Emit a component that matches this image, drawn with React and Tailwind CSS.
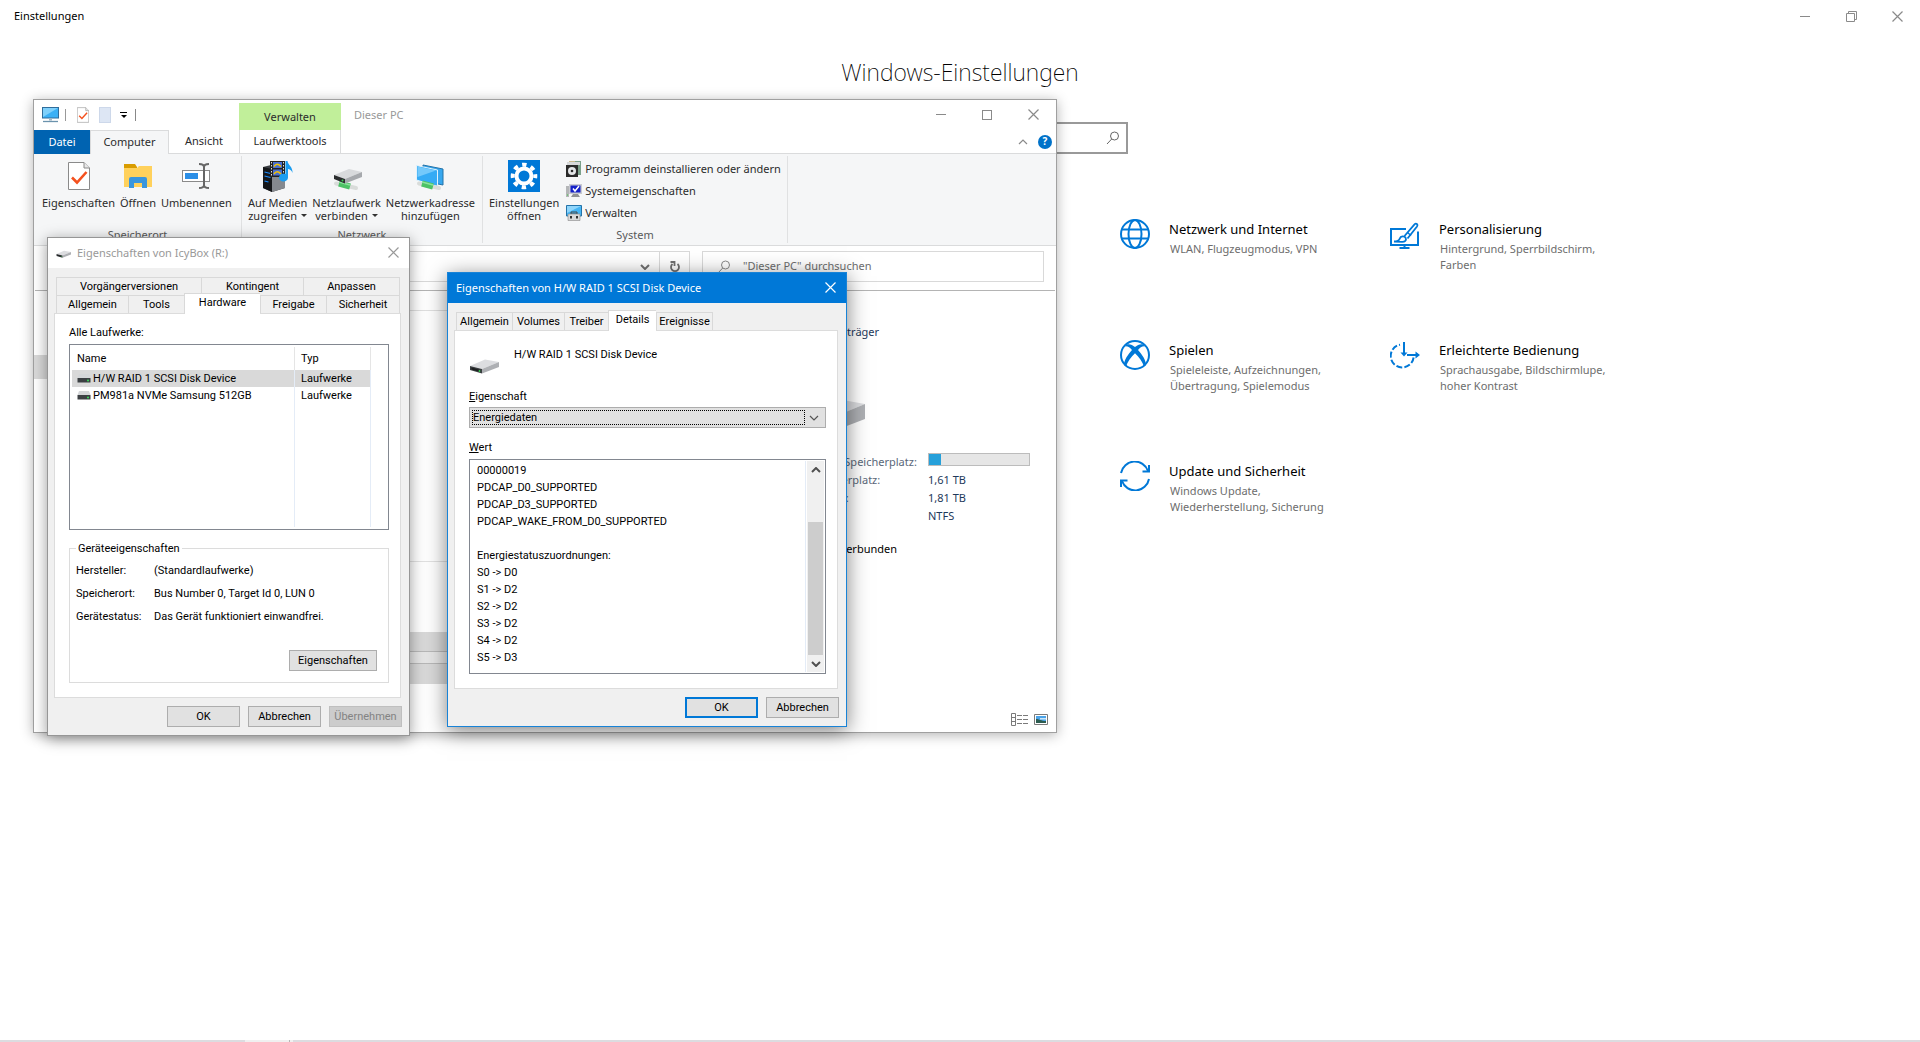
import { useState } from "react";
import clsx from "clsx";

const SETTINGS = [
  {
    title: "Netzwerk und Internet",
    text: "WLAN, Flugzeugmodus, VPN",
    icon: GlobeIcon,
    place: "col-start-4",
  },
  {
    title: "Personalisierung",
    text: "Hintergrund, Sperrbildschirm, Farben",
    icon: PersonalizeIcon,
    place: "col-start-5",
  },
  {
    title: "Spielen",
    text: "Spieleleiste, Aufzeichnungen, Übertragung, Spielemodus",
    icon: XboxIcon,
    place: "col-start-4",
  },
  {
    title: "Erleichterte Bedienung",
    text: "Sprachausgabe, Bildschirmlupe, hoher Kontrast",
    icon: EaseIcon,
    place: "col-start-5",
  },
  {
    title: "Update und Sicherheit",
    text: "Windows Update, Wiederherstellung, Sicherung",
    icon: UpdateIcon,
    place: "col-start-4",
  },
];

const POWER_DATA = [
  "00000019",
  "PDCAP_D0_SUPPORTED",
  "PDCAP_D3_SUPPORTED",
  "PDCAP_WAKE_FROM_D0_SUPPORTED",
  "",
  "Energiestatuszuordnungen:",
  "S0 -> D0",
  "S1 -> D2",
  "S2 -> D2",
  "S3 -> D2",
  "S4 -> D2",
  "S5 -> D3",
];

const DRIVES = [
  { name: "H/W RAID 1 SCSI Disk Device", type: "Laufwerke" },
  { name: "PM981a NVMe Samsung 512GB", type: "Laufwerke" },
];

/* ---------- icons ---------- */

function GlobeIcon() {
  return (
    <svg viewBox="0 0 30 30" className="size-[30px]" fill="none" stroke="#0078d7" strokeWidth="2">
      <circle cx="15" cy="15" r="14" />
      <ellipse cx="15" cy="15" rx="6.5" ry="14" />
      <path d="M2 10.5h26M2 19.5h26" />
    </svg>
  );
}

function PersonalizeIcon() {
  return (
    <svg viewBox="0 0 30 30" className="size-[30px]" fill="none" stroke="#0078d7" strokeWidth="2">
      <path d="M16 10H1v16h27V12.500" />
      <path d="M14.500 26v3M9.500 29h10" />
      <path d="M14.500 17 24.500 5.300c1.700-1.600 3.900.2 2.500 2.200L17.500 19.500" strokeWidth="1.800" />
      <path d="M4 22.500c4 0 5.200-.8 5.800-3 .7-2.500 4.700-3 5.900-.5 1 2.300-.9 3.800-3.400 3.800z" strokeWidth="1.800" />
      <path d="m17.500 13.500 3.500 3" strokeWidth="1.500" />
    </svg>
  );
}

function XboxIcon() {
  return (
    <svg viewBox="0 0 30 30" className="size-[30px]">
      <circle cx="15" cy="15" r="14" fill="none" stroke="#0078d7" strokeWidth="2" />
      <path
        fill="#0078d7"
        d="M7 4.500C9.500 3.500 12.500 5 15 7c2.500-2 5.500-3.500 8-2.500l2.500 2C22.500 5.800 20 7.800 18 10c4 4.500 8 10 8 15l-2 1.500C22.500 21.500 19 17 15 13.200 11 17 7.500 21.500 6 26.500L4 25c0-5 4-10.500 8-15C10 7.800 7.500 5.800 4.500 6.500z"
      />
    </svg>
  );
}

function EaseIcon() {
  return (
    <svg viewBox="0 0 30 30" className="size-[30px]" fill="none" stroke="#0078d7" strokeWidth="2">
      <path d="M23.600 17.500A11.500 11.500 0 1 1 10 4.700" strokeDasharray="6 2.200" />
      <path d="M14 2v12M17 15h9" />
      <path d="M10.500 12.500h7L14 16.500zM25.500 11.500 30 15l-4.500 3.500z" fill="#0078d7" stroke="none" />
    </svg>
  );
}

function UpdateIcon() {
  return (
    <svg viewBox="0 0 30 30" className="size-[30px]" fill="none" stroke="#0078d7" strokeWidth="2">
      <path d="M1 12A14 14 0 0 1 28 10" />
      <path d="M29 4v6.500h-6.500" />
      <path d="M29 18A14 14 0 0 1 2 20" />
      <path d="M1 26v-6.500h6.500" />
    </svg>
  );
}

function SearchIcon({ className }) {
  return (
    <svg viewBox="0 0 14 14" className={clsx("size-3.5", className)} fill="none" stroke="currentColor">
      <circle cx="8.500" cy="5" r="4" />
      <path d="M5.700 8 1 13" />
    </svg>
  );
}

function CloseIcon({ className }) {
  return (
    <svg viewBox="0 0 11 11" className={clsx("size-[11px]", className)} fill="none" stroke="currentColor">
      <path d="m.5.5 10 10M10.500.5l-10 10" strokeWidth="1.200" />
    </svg>
  );
}

function Chevron({ up, bold, className }) {
  return (
    <svg
      viewBox="0 0 10 6"
      className={clsx("h-1.5 w-2.5", up && "rotate-180", className)}
      fill="none"
      stroke="currentColor"
      strokeWidth={bold ? 2 : 1.2}
    >
      <path d="m1 1 4 4 4-4" />
    </svg>
  );
}

function DocumentCheck({ className }) {
  return (
    <svg viewBox="0 0 22 28" className={className}>
      <path d="M.5.500h15.500l5.500 5.500v21.500H.5z" fill="#fff" stroke="#8a8a8a" />
      <path d="M16 .5V6h5.500" fill="#e8e8e8" stroke="#8a8a8a" />
      <path d="m4 15.500 5 5L18.500 10" fill="none" stroke="#f4511e" strokeWidth="2.600" />
    </svg>
  );
}

function MonitorIcon() {
  return (
    <svg viewBox="0 0 17 16" className="h-4 w-[17px]">
      <rect x=".5" y=".5" width="16" height="10.500" fill="#3bb0f5" stroke="#2f6d9c" />
      <path d="M1 1h15L1 10z" fill="#7fd0fb" />
      <path d="M7 11h3v2.500H7z" fill="#9fb6c6" />
      <path d="M1 14.500h15" stroke="#6b93ad" strokeWidth="1.300" />
    </svg>
  );
}

function FolderIcon() {
  return (
    <svg viewBox="0 0 28 24" className="h-6 w-7">
      <path d="M0 0h11l2 3v3H0z" fill="#d99c00" />
      <path d="M0 4h13l2-2h13v21H0z" fill="#ffd15c" />
      <path d="M5 15a2 2 0 0 1 2-2h14a2 2 0 0 1 2 2v9h-5v-5h-8v5H5z" fill="#3a96dd" />
    </svg>
  );
}

function RenameIcon() {
  return (
    <svg viewBox="0 0 28 26" className="h-[26px] w-7">
      <rect x=".5" y="7.500" width="27" height="11" fill="#fff" stroke="#8a8a8a" />
      <rect x="3" y="10" width="13" height="6" fill="#2b8ee6" />
      <path d="M17 1c3 0 5 .5 5 3 0-2.500 2-3 5-3M22 3v20M17 25c3 0 5-.5 5-3 0 2.500 2 3 5 3" fill="none" stroke="#666" strokeWidth="2" />
    </svg>
  );
}

function MediaIcon() {
  return (
    <svg viewBox="0 0 32 32" className="size-8">
      <path d="M1 7l8-2 14 5v18l-13 4-9-4z" fill="#3c3f44" />
      <path d="M10 9l13-2v21l-13 4z" fill="#85898f" />
      <path d="M1 7l9 2v23l-9-4z" fill="#15171a" />
      <path d="M2.500 12l6 1.500M2.500 16l6 1.500M2.500 21l4 1" stroke="#1b8cff" strokeWidth="1.200" />
      <rect x="8" y="1" width="15" height="16" fill="#222" />
      <rect x="11" y="2" width="9" height="6" fill="#4a6fd0" />
      <rect x="11" y="9.500" width="9" height="6" fill="#4a6fd0" />
      <path d="M12 6.500c2-3 4-3 7 0M12 14c2-3 4-3 7 0" stroke="#f2c200" strokeWidth="1.500" fill="none" />
      <path d="M9.500 2v15M21.500 2v15" stroke="#ddd" strokeDasharray="1.500 1.500" />
      <path d="M23.500 1h2c.5 4 5.500 6 5 12-1-3-3-4-4.500-4v8.500a4.500 4 0 1 1-2.500-3.500z" fill="#1b9df0" />
    </svg>
  );
}

function DriveIcon({ className, dark }) {
  return (
    <svg viewBox="0 0 32 16" className={className}>
      <path d="M1 8 16 1.500l14 2.500-17 7z" fill="#dcdde0" />
      <path d="M13 11 30 4v5L13 15.500z" fill="#aeb0b4" />
      <path d="M1 8l12 3v4.500L1 12z" fill={dark ? "#3c3f42" : "#5a5d60"} />
      <path d="M2.500 9.600l9 2.300v2L2.500 11.500z" fill="#1e2022" />
      <circle cx="10.500" cy="13" r=".9" fill="#39d353" />
    </svg>
  );
}

// Green network cable that sits below the shared drive / network monitors
function Cable() {
  return (
    <g>
      <path d="M5 22.500 25 27" stroke="#d9dcda" strokeWidth="4" strokeLinecap="round" />
      <path d="M8 22.500 19 25.500" stroke="#4cc265" strokeWidth="6" />
      <path d="M8 21 19 24" stroke="#8be39c" strokeWidth="1.500" />
    </g>
  );
}

function NetDriveIcon() {
  return (
    <svg viewBox="0 0 32 30" className="h-[30px] w-8">
      <Cable />
      <path d="M3 14 18 8l13 3-17 7z" fill="#d8dadc" />
      <path d="M14 18 31 11v5l-17 6.500z" fill="#a6a9ad" />
      <path d="M3 14l11 4v4.500L3 18z" fill="#2b2d2f" />
      <circle cx="11.500" cy="19.500" r="1" fill="#39d353" />
    </svg>
  );
}

function NetPlaceIcon() {
  return (
    <svg viewBox="0 0 32 30" className="h-[30px] w-8">
      <path d="M9 4l20 4v16L9 20z" fill="#37a7ee" stroke="#2573a8" />
      <path d="M2.500 4.500 23.500 9v16.500L2.500 19z" fill="#35abf5" stroke="#e2f2fc" />
      <path d="M3.500 5.500 22 9.500 3.500 16z" fill="#74c9fb" />
      <Cable />
    </svg>
  );
}

function GearTile() {
  return (
    <svg viewBox="0 0 32 32" className="size-8">
      <path d="M0 0h32v32H0z" fill="#0078d7" />
      <circle cx="16" cy="16" r="7.500" fill="none" stroke="#fff" strokeWidth="4" />
      <circle cx="16" cy="16" r="11.300" fill="none" stroke="#fff" strokeWidth="4" strokeDasharray="4.400 4.475" strokeDashoffset="2.200" />
    </svg>
  );
}

function ProgramsIcon() {
  return (
    <svg viewBox="0 0 16 16" className="size-4">
      <path d="M3 0h12v13H3z" fill="#c9b98e" />
      <path d="M9 0h6v14H9z" fill="#7ba08a" />
      <path d="M1 1h13v3H1z" fill="#d7d9da" />
      <path d="M0 4h12v12H0z" fill="#2a2a2a" />
      <circle cx="6" cy="10" r="4" fill="#e4e6e8" />
      <circle cx="6" cy="10" r="1.300" fill="#2a2a2a" />
    </svg>
  );
}

function SystemIcon() {
  return (
    <svg viewBox="0 0 16 16" className="size-4">
      <path d="M0 3h3v11H0z" fill="#b4b6b8" />
      <path d="M3 1h13v10H3z" fill="#c9cbd0" />
      <path d="M4.500 2.500h10v7h-10z" fill="#1420c8" />
      <path d="m7 5.500 2 2.500 4-5" fill="none" stroke="#fff" strokeWidth="1.500" />
      <path d="M7 11h5l2 3H5z" fill="#8f9194" />
      <path d="M1 12h1" stroke="#3bd23b" />
    </svg>
  );
}

function ManageIcon() {
  return (
    <svg viewBox="0 0 16 16" className="size-4">
      <path d="M.5.500h15V11H.5z" fill="#45b5f5" stroke="#2573a8" />
      <path d="M1 1h14L1 8z" fill="#8fd5fb" />
      <path d="M5 7h6v2H5z" fill="none" stroke="#444" />
      <path d="M2 9h12v6.500H2z" fill="#d9d9d9" stroke="#888" strokeWidth=".6" />
      <path d="M5 11v2.500M11 11v2.500" stroke="#333" strokeWidth="2" />
    </svg>
  );
}

function RefreshIcon() {
  return (
    <svg viewBox="0 0 12 12" className="size-3" fill="none" stroke="#707070" strokeWidth="1.800">
      <path d="M8.500 3A4 4 0 1 1 3.500 3" />
      <path d="M1.500 1h4v4" />
    </svg>
  );
}

function MiniDrive() {
  return (
    <svg viewBox="0 0 14 9" className="mr-0.5 h-[9px] w-3.5">
      <path d="M2 0h10l1.500 4H.5z" fill="#d4d6d8" />
      <path d="M.5 4h13v4.500H.5z" fill="#3c4043" />
      <circle cx="11" cy="6.500" r="1" fill="#39e05a" />
    </svg>
  );
}

/* ---------- shared controls ---------- */

function DialogButton({ children, primary, disabled, wide }) {
  return (
    <button
      type="button"
      disabled={disabled}
      className={clsx(
        "h-[21px] text-center",
        wide ? "w-[88px]" : "w-[73px]",
        primary ? "border-2 border-[#0078d7]" : "border border-[#adadad]",
        disabled ? "border-[#bfbfbf] bg-[#cccccc] text-[#838383]" : "bg-[#e1e1e1]"
      )}
    >
      {children}
    </button>
  );
}

function Tab({ children, className, active, last }) {
  return (
    <button
      type="button"
      role="tab"
      aria-selected={!!active}
      className={clsx(
        "border-t border-l border-[#d9d9d9] text-center",
        active ? "relative -mt-0.5 -mb-px bg-white pb-1" : "bg-[#f0f0f0]",
        last && "border-r",
        className
      )}
    >
      {children}
    </button>
  );
}

function RibbonButton({ icon, lines, arrow }) {
  return (
    <button type="button" className="flex flex-col items-center">
      <span className="flex h-8 items-center">{icon}</span>
      <span className="mt-1 flex flex-col items-center leading-[13px]">
        {lines.map((line, i) => (
          <span key={line} className="flex items-center gap-1 whitespace-nowrap">
            {line}
            {arrow && i === lines.length - 1 && (
              <span className="border-x-[3px] border-t-[3px] border-x-transparent border-t-[#333]" />
            )}
          </span>
        ))}
      </span>
    </button>
  );
}

function RibbonGroup({ label, className, children }) {
  return (
    <section className={clsx("my-0.5 flex flex-col justify-between border-r border-[#e0e1e2]", className)}>
      <div className="flex items-start pt-1">{children}</div>
      <span className="text-center leading-4 text-[#5a5a5a]">{label}</span>
    </section>
  );
}

/* ---------- windows ---------- */

function SettingsPage() {
  return (
    <main className="flex min-h-screen flex-col">
      <header className="flex h-8 items-center justify-between pl-3.5 text-[11px]">
        <span>Einstellungen</span>
        <div className="flex text-[#8a8a8a]">
          <button type="button" aria-label="Minimieren" className="flex h-8 w-[46px] items-center justify-center">
            <span className="h-px w-2.5 bg-current" />
          </button>
          <button type="button" aria-label="Verkleinern" className="flex h-8 w-[46px] items-center justify-center">
            <svg viewBox="0 0 11 11" className="size-[11px]" fill="none" stroke="currentColor">
              <path d="M.5 2.500h8v8h-8zM2.500 2.500v-2h8v8h-2" />
            </svg>
          </button>
          <button type="button" aria-label="Schließen" className="flex h-8 w-[46px] items-center justify-center">
            <CloseIcon />
          </button>
        </div>
      </header>
      <h1 className="mt-6 text-center text-[23px] leading-8 font-extralight">Windows-Einstellungen</h1>
      <div className="mx-auto mt-[34px] flex h-8 w-[336px] items-center justify-end border-2 border-[#999] pr-1.5">
        <input aria-label="Einstellung suchen" className="min-w-0 flex-1 outline-none" />
        <SearchIcon className="text-[#666]" />
      </div>
      <div className="mx-auto mt-[65px] grid auto-rows-[121px] grid-cols-[repeat(5,270px)]">
        {SETTINGS.map(({ title, text, icon: Icon, place }) => (
          <a key={title} href="#" className={clsx("flex items-start gap-[19px] pl-[25px]", place)}>
            <span className="shrink-0">
              <Icon />
            </span>
            <span className="flex w-[172px] flex-col">
              <span className="text-[13px] leading-5">{title}</span>
              <span className="mt-0.5 ml-px text-[11px] leading-4 text-[#6d6d6d]">{text}</span>
            </span>
          </a>
        ))}
      </div>
      <footer className="mt-auto flex h-0.5 bg-[#dcdce0]">
        <span className="ml-[245px] w-[44px] bg-[#f0f0f0]" />
        <span className="w-px bg-[#b5b5b5]" />
        <span className="w-[3px] bg-[#f0f0f0]" />
      </footer>
    </main>
  );
}

function ExplorerWindow() {
  return (
    <section className="absolute top-[99px] left-[33px] flex h-[634px] w-[1024px] flex-col border border-[#a0a0a0] bg-white text-[11px] text-[#2b2b2b] shadow-[0_2px_12px_rgba(0,0,0,0.3)]">
      <header className="flex h-[30px] shrink-0 items-center">
        <div className="flex w-[205px] items-center pl-2">
          <MonitorIcon />
          <span className="ml-1.5 h-3 w-px bg-[#999]" />
          <DocumentCheck className="ml-[11px] h-4 w-3" />
          <span className="ml-2.5 h-4 w-3 border border-[#cdd8ea] bg-[#dde6f4]" />
          <span className="ml-[9px] flex flex-col items-center gap-0.5">
            <span className="h-px w-[7px] bg-black" />
            <span className="border-x-[3px] border-t-[3px] border-x-transparent border-t-black" />
          </span>
          <span className="ml-2 h-3 w-px bg-[#888]" />
        </div>
        <span className="flex h-[27px] w-[102px] items-center justify-center self-end bg-[#c1ef9a] pt-px">Verwalten</span>
        <h2 className="ml-[13px] text-[#999]">Dieser PC</h2>
        <div className="ml-auto flex pb-px text-[#8a8a8a]">
          <button type="button" aria-label="Minimieren" className="flex h-7 w-[46px] items-center justify-center">
            <span className="h-px w-2.5 bg-current" />
          </button>
          <button type="button" aria-label="Maximieren" className="flex h-7 w-[46px] items-center justify-center">
            <span className="size-2.5 border border-current" />
          </button>
          <button type="button" aria-label="Schließen" className="flex h-7 w-[46px] items-center justify-center">
            <CloseIcon />
          </button>
        </div>
      </header>

      <nav className="flex h-6 shrink-0">
        <button type="button" className="w-14 bg-[#0063b1] text-white">Datei</button>
        <button type="button" className="w-[79px] border-x border-t border-[#dadbdc] bg-[#f5f6f7]">Computer</button>
        <button type="button" className="w-[70px] border-b border-[#dadbdc]">Ansicht</button>
        <button type="button" className="w-[102px] border-x border-b border-[#dadbdc]">Laufwerktools</button>
        <div className="flex flex-1 items-center justify-end gap-2.5 border-b border-[#dadbdc] pr-1">
          <Chevron up className="text-[#8a8a8a]" />
          <a
            href="#"
            aria-label="Hilfe"
            className="flex size-3.5 items-center justify-center rounded-full bg-[#0072c9] text-[10px] font-bold text-white"
          >
            ?
          </a>
        </div>
      </nav>

      <div className="flex h-[92px] shrink-0 border-b border-[#dadbdc] bg-[#f5f6f7]">
        <RibbonGroup label="Speicherort" className="w-52">
          <div className="flex gap-[5px] pl-2">
            <RibbonButton icon={<DocumentCheck className="h-7 w-[22px]" />} lines={["Eigenschaften"]} />
            <RibbonButton icon={<FolderIcon />} lines={["Öffnen"]} />
            <RibbonButton icon={<RenameIcon />} lines={["Umbenennen"]} />
          </div>
        </RibbonGroup>
        <RibbonGroup label="Netzwerk" className="w-[241px]">
          <div className="flex gap-[5px] pl-1.5">
            <RibbonButton icon={<MediaIcon />} lines={["Auf Medien", "zugreifen"]} arrow />
            <RibbonButton icon={<NetDriveIcon />} lines={["Netzlaufwerk", "verbinden"]} arrow />
            <RibbonButton icon={<NetPlaceIcon />} lines={["Netzwerkadresse", "hinzufügen"]} />
          </div>
        </RibbonGroup>
        <RibbonGroup label="System" className="w-[305px]">
          <div className="flex gap-[7px] pl-1.5">
            <RibbonButton icon={<GearTile />} lines={["Einstellungen", "öffnen"]} />
            <div className="-mt-px flex flex-col gap-0.5">
              <button type="button" className="flex h-5 items-center gap-[3px]">
                <ProgramsIcon />
                Programm deinstallieren oder ändern
              </button>
              <button type="button" className="flex h-5 items-center gap-[3px]">
                <SystemIcon />
                Systemeigenschaften
              </button>
              <button type="button" className="flex h-5 items-center gap-[3px]">
                <ManageIcon />
                Verwalten
              </button>
            </div>
          </div>
        </RibbonGroup>
      </div>

      <div className="mx-px flex h-[45px] shrink-0 border-b border-[#b4b4b4] pt-[5px] pr-[11px] pl-[100px]">
        <div className="flex h-[31px] flex-1 border border-[#d9d9d9]">
          <span className="ml-auto flex w-[29px] items-center justify-center">
            <Chevron bold className="text-[#707070]" />
          </span>
          <button
            type="button"
            aria-label="Aktualisieren"
            className="flex w-[30px] items-center justify-center border-l border-[#d9d9d9]"
          >
            <RefreshIcon />
          </button>
        </div>
        <label className="ml-3 flex h-[31px] w-[342px] items-center gap-3 border border-[#d9d9d9] pl-3.5">
          <SearchIcon className="text-[#8a8a8a]" />
          <input
            aria-label="Suchen"
            placeholder={'"Dieser PC" durchsuchen'}
            className="min-w-0 flex-1 outline-none placeholder:text-[#6d6d6d]"
          />
        </label>
      </div>

      <div className="flex flex-1">
        <aside className="w-[200px] pt-16">
          <div className="h-6 bg-[#d9d9d9]" />
        </aside>
        <div className="flex w-[526px] flex-col">
          <div className="h-5 border-b border-[#e0e0e0]" />
          <div className="h-[251px] border-b border-[#e2e2e2]" />
          <div className="mt-[70px] h-5 border-b border-[#b8b8b8] bg-[#d9d9d9]" />
          <div className="h-3 border-b border-[#b8b8b8] bg-[#e6e6e6]" />
          <div className="h-5 bg-[#d9d9d9]" />
        </div>
        <aside className="flex flex-1 flex-col pt-8 pl-[15px] text-[#1e395b]">
          <p className="leading-[18px]">Lokaler Datenträger</p>
          <DriveIcon className="mt-[51px] h-12 w-24" />
          <dl className="mt-[13px] grid grid-cols-[153px_102px] leading-[18px]">
            <dt className="text-[#5a6779]">Verwendeter Speicherplatz:</dt>
            <dd className="flex items-start">
              <span className="h-[13px] w-full border border-[#bcbcbc] bg-[#e6e6e6]">
                <span className="block h-full w-3 bg-[#26a0da]" />
              </span>
            </dd>
            <dt className="text-[#5a6779]">Freier Speicherplatz:</dt>
            <dd>1,61 TB</dd>
            <dt className="text-[#5a6779]">Gesamtgröße:</dt>
            <dd>1,81 TB</dd>
            <dt className="text-[#5a6779]">Dateisystem:</dt>
            <dd>NTFS</dd>
          </dl>
          <p className="mt-[15px] leading-[18px] text-black">Laufwerk ist verbunden</p>
          <div className="mt-auto flex items-center gap-1.5 self-end pr-2 pb-1.5">
            <button type="button" aria-label="Details">
              <svg viewBox="0 0 17 13" className="h-[13px] w-[17px]" stroke="#7a7a7a" fill="none">
                <path d="M.5.500h4v12h-4zM.5 4.500h4M.5 8.500h4" />
                <path d="M6 2.500h5M12 2.500h5M6 6.500h5M12 6.500h5M6 10.500h5M12 10.500h5" />
              </svg>
            </button>
            <button type="button" aria-label="Große Symbole">
              <svg viewBox="0 0 14 13" className="h-[13px] w-3.5">
                <path d="M.5 1.500h13v10H.5z" fill="#fff" stroke="#7a7a7a" />
                <path d="M2 3h10v7H2z" fill="#4aa3e8" />
                <path d="M2 6c3 0 5 2 10 2v2H2z" fill="#2c5c50" />
                <path d="M6 5h6v1.500H6z" fill="#cfe8fa" />
              </svg>
            </button>
          </div>
        </aside>
      </div>
    </section>
  );
}

function DriveProperties() {
  const [selected, setSelected] = useState(0);

  return (
    <section className="absolute top-[237px] left-[47px] flex w-[363px] flex-col border border-[#969696] bg-[#f0f0f0] font-['Roboto',sans-serif] text-[11px] leading-[13px] text-black shadow-[0_3px_14px_rgba(0,0,0,0.4)]">
      <header className="flex h-[30px] items-center bg-white pr-2.5 pb-0.5 pl-2 font-['Noto_Sans',sans-serif] text-[#999]">
        <DriveIcon dark className="mt-1 h-2 w-4" />
        <h2 className="ml-[5px]">Eigenschaften von IcyBox (R:)</h2>
        <button type="button" aria-label="Schließen" className="ml-auto">
          <CloseIcon />
        </button>
      </header>

      <div role="tablist" className="mt-[9px] ml-2 flex flex-col">
        <div className="flex h-[18px]">
          <Tab className="w-[145px]">Vorgängerversionen</Tab>
          <Tab className="w-[102px]">Kontingent</Tab>
          <Tab className="w-[97px]" last>Anpassen</Tab>
        </div>
        <div className="flex h-[18px]">
          <Tab className="w-[72px]">Allgemein</Tab>
          <Tab className="w-14">Tools</Tab>
          <Tab className="w-[76px]" active>Hardware</Tab>
          <Tab className="w-[66px]">Freigabe</Tab>
          <Tab className="w-[74px]" last>Sicherheit</Tab>
        </div>
      </div>

      <div className="mr-2 ml-1.5 border border-[#dcdcdc] bg-white pt-3 pr-[11px] pb-3.5 pl-3.5">
        <p>Alle Laufwerke:</p>
        <div className="mt-[5px] h-[186px] border border-[#828790] p-0.5">
          <table className="h-full w-[299px] text-left">
            <thead>
              <tr className="h-[23px]">
                <th className="border-r border-[#e5e5e5] pl-[5px] font-normal">Name</th>
                <th className="w-[76px] border-r border-[#e5e5e5] pl-1.5 font-normal">Typ</th>
              </tr>
            </thead>
            <tbody>
              {DRIVES.map((drive, i) => (
                <tr
                  key={drive.name}
                  onClick={() => setSelected(i)}
                  className={clsx("h-[17px]", selected === i && "bg-[#d9d9d9]")}
                >
                  <td className="border-r border-[#e4ecf7] pl-[5px]">
                    <span className="flex items-center">
                      <MiniDrive />
                      {drive.name}
                    </span>
                  </td>
                  <td className="border-r border-[#e4ecf7] pl-1.5">{drive.type}</td>
                </tr>
              ))}
              <tr>
                <td className="border-r border-[#e4ecf7]" />
                <td className="border-r border-[#e4ecf7]" />
              </tr>
            </tbody>
          </table>
        </div>

        <fieldset className="mt-3 flex flex-col border border-[#dcdcdc] pb-[11px] pl-1.5">
          <legend className="px-0.5">Geräteeigenschaften</legend>
          <dl className="grid grid-cols-[78px_1fr] gap-y-2.5 pt-[9px]">
            <dt>Hersteller:</dt>
            <dd>(Standardlaufwerke)</dd>
            <dt>Speicherort:</dt>
            <dd>Bus Number 0, Target Id 0, LUN 0</dd>
            <dt>Gerätestatus:</dt>
            <dd>Das Gerät funktioniert einwandfrei.</dd>
          </dl>
          <div className="mt-[27px] mr-[11px] flex justify-end">
            <DialogButton wide>Eigenschaften</DialogButton>
          </div>
        </fieldset>
      </div>

      <div className="flex justify-end gap-2 pt-2 pr-[7px] pb-2">
        <DialogButton>OK</DialogButton>
        <DialogButton>Abbrechen</DialogButton>
        <DialogButton disabled>Übernehmen</DialogButton>
      </div>
    </section>
  );
}

function DeviceProperties() {
  const [property, setProperty] = useState("Energiedaten");

  return (
    <section className="absolute top-[272px] left-[447px] flex w-[400px] flex-col border border-[#1883d7] bg-[#f0f0f0] font-['Roboto',sans-serif] text-[11px] leading-[13px] text-black shadow-[0_4px_20px_rgba(0,0,0,0.5)]">
      <header className="flex h-[30px] items-center bg-[#0078d7] pr-2.5 pb-0.5 pl-2 font-['Noto_Sans',sans-serif] text-white">
        <h2>Eigenschaften von H/W RAID 1 SCSI Disk Device</h2>
        <button type="button" aria-label="Schließen" className="ml-auto">
          <CloseIcon />
        </button>
      </header>

      <div role="tablist" className="mt-[9px] ml-2 flex h-[18px]">
        <Tab className="w-14">Allgemein</Tab>
        <Tab className="w-[52px]">Volumes</Tab>
        <Tab className="w-11">Treiber</Tab>
        <Tab className="w-12" active>Details</Tab>
        <Tab className="w-[57px]" last>Ereignisse</Tab>
      </div>

      <div className="mr-2 ml-1.5 border border-[#dcdcdc] bg-white pt-[17px] pr-[11px] pb-3.5 pl-3.5">
        <div className="flex gap-[13px]">
          <DriveIcon dark className="mt-2.5 h-4 w-8" />
          <p>H/W RAID 1 SCSI Disk Device</p>
        </div>
        <label htmlFor="property" className="mt-4 block">
          <u>E</u>igenschaft
        </label>
        <div className="mt-1 flex h-[21px] items-center border border-[#adadad] bg-[#e1e1e1] p-0.5">
          <select
            id="property"
            value={property}
            onChange={(e) => setProperty(e.target.value)}
            className="h-full flex-1 appearance-none border border-dotted border-black outline-none"
          >
            <option>Energiedaten</option>
          </select>
          <Chevron className="mx-1 text-[#555]" />
        </div>
        <p className="mt-[13px]">
          <u>W</u>ert
        </p>
        <div className="mt-[5px] flex h-[215px] border border-[#828790] p-px">
          <ul className="flex-1 border-r border-[#e4ecf7] pt-px pl-1.5 leading-[17px]">
            {POWER_DATA.map((line, i) => (
              <li key={i} className="h-[17px]">
                {line}
              </li>
            ))}
          </ul>
          <div className="ml-px flex w-[17px] flex-col items-center bg-[#f0f0f0] text-[#505050]">
            <span className="flex h-[17px] items-center">
              <Chevron up bold />
            </span>
            <span className="mt-auto h-[133px] w-[15px] bg-[#cdcdcd]" />
            <span className="flex h-[17px] items-center">
              <Chevron bold />
            </span>
          </div>
        </div>
      </div>

      <div className="flex justify-end gap-2 pt-2 pr-[7px] pb-2">
        <DialogButton primary>OK</DialogButton>
        <DialogButton>Abbrechen</DialogButton>
      </div>
    </section>
  );
}

export default function App() {
  return (
    <div className="relative min-h-screen overflow-hidden bg-white font-['Noto_Sans','Open_Sans',sans-serif] text-black">
      <SettingsPage />
      <ExplorerWindow />
      <DriveProperties />
      <DeviceProperties />
    </div>
  );
}
